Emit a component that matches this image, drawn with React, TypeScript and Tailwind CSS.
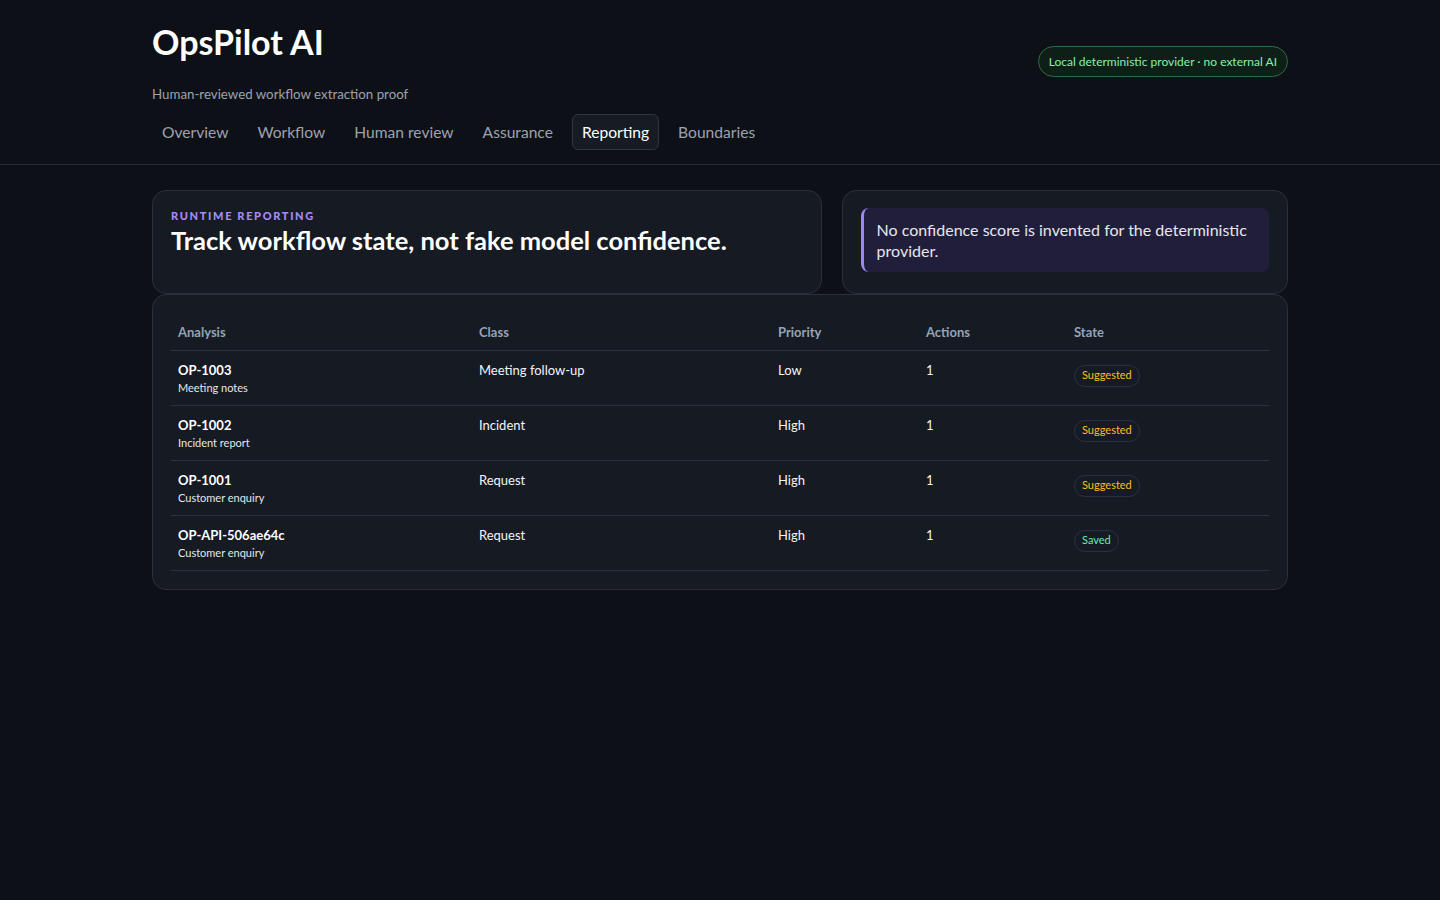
import React from "react";

const rows = [
  { id: "OP-1003", sub: "Meeting notes", cls: "Meeting follow-up", pri: "Low", act: "1", state: "Suggested" },
  { id: "OP-1002", sub: "Incident report", cls: "Incident", pri: "High", act: "1", state: "Suggested" },
  { id: "OP-1001", sub: "Customer enquiry", cls: "Request", pri: "High", act: "1", state: "Suggested" },
  { id: "OP-API-506ae64c", sub: "Customer enquiry", cls: "Request", pri: "High", act: "1", state: "Saved" },
];

const tabs = ["Overview", "Workflow", "Human review", "Assurance", "Reporting", "Boundaries"];

export default function App() {
  return (
    <div
      className="min-h-[900px] bg-[#0d1016] text-[#f3f4f6]"
      style={{ fontFamily: "Lato, 'Noto Sans', sans-serif" }}
    >
      <header className="border-b border-[#262b35]">
        <div className="mx-auto w-[1136px] pt-[22px] pb-[14px]">
          <div className="flex items-center justify-between">
            <div>
              <h1 className="text-[34px] font-bold leading-[40px] text-white">OpsPilot AI</h1>
              <p className="mt-[24px] text-[13.3px] leading-[16px] text-[#9ca3af]">
                Human-reviewed workflow extraction proof
              </p>
            </div>
            <div className="-mt-[2px] rounded-full border border-[#2f6b45] bg-[#0e1f17] px-[10px] py-[6px] text-[12px] leading-[17px] text-[#86efac]">
              Local deterministic provider · no external AI
            </div>
          </div>
          <nav className="mt-[12px] flex gap-[9px]">
            {tabs.map((t) => (
              <div
                key={t}
                className={
                  t === "Reporting"
                    ? "rounded-[6px] border border-[#30363f] bg-[#171b23] px-[9px] py-[7px] text-[15.6px] leading-[20px] text-white"
                    : "border border-transparent px-[9px] py-[7px] text-[15.6px] leading-[20px] text-[#9ca3af]"
                }
              >
                {t}
              </div>
            ))}
          </nav>
        </div>
      </header>

      <main className="mx-auto w-[1136px] pt-[25px]">
        <div className="grid grid-cols-[1.5fr_1fr] gap-[20px]">
          <section className="rounded-[14px] border border-[#2a2f3a] bg-[#161a22] p-[18px]">
            <div className="text-[11px] font-black uppercase leading-[14px] tracking-[0.15em] text-[#a78bfa]">
              Runtime reporting
            </div>
            <h2 className="mt-[2px] text-[25.5px] font-bold leading-[30px] text-white">
              Track workflow state, not fake model confidence.
            </h2>
          </section>
          <section className="rounded-[14px] border border-[#2a2f3a] bg-[#161a22] pt-[17px] pb-[21px] px-[18px]">
            <div className="rounded-[8px] border-l-[3px] border-[#9b87f5] bg-[#211e3b] py-[11px] pl-[13px] pr-[14px] text-[16px] leading-[21px] text-[#e5e7eb]">
              No confidence score is invented for the deterministic provider.
            </div>
          </section>
        </div>

        <section className="rounded-[14px] border border-[#2a2f3a] bg-[#161a22] px-[18px] pt-[18px] pb-[18px]">
          <table className="w-full border-collapse text-left">
            <thead>
              <tr className="border-b border-[#2b303b]">
                <th className="w-[301px] px-[7px] pt-[11px] pb-[10px] text-[13px] font-bold leading-[16px] text-[#94a3b8]">Analysis</th>
                <th className="w-[299px] px-[7px] pt-[11px] pb-[10px] text-[13px] font-bold leading-[16px] text-[#94a3b8]">Class</th>
                <th className="w-[148px] px-[7px] pt-[11px] pb-[10px] text-[13px] font-bold leading-[16px] text-[#94a3b8]">Priority</th>
                <th className="w-[148px] px-[7px] pt-[11px] pb-[10px] text-[13px] font-bold leading-[16px] text-[#94a3b8]">Actions</th>
                <th className="px-[7px] pt-[11px] pb-[10px] text-[13px] font-bold leading-[16px] text-[#94a3b8]">State</th>
              </tr>
            </thead>
            <tbody>
              {rows.map((r) => (
                <tr key={r.id} className="border-b border-[#2b303b] align-top">
                  <td className="h-[55px] px-[7px] pt-[11px]">
                    <div className="text-[13px] font-bold leading-[17px] text-white">{r.id}</div>
                    <div className="text-[11px] leading-[18px] text-[#e5e7eb]">{r.sub}</div>
                  </td>
                  <td className="px-[7px] pt-[11px] text-[13px] leading-[17px] text-[#f3f4f6]">{r.cls}</td>
                  <td className="px-[7px] pt-[11px] text-[13px] leading-[17px] text-[#f3f4f6]">{r.pri}</td>
                  <td className="px-[7px] pt-[11px] text-[13px] leading-[17px] text-[#f3f4f6]">{r.act}</td>
                  <td className="px-[7px] pt-[10px]">
                    <span
                      className={
                        r.state === "Saved"
                          ? "inline-block rounded-full border border-[#2b303b] px-[7px] pt-[2px] pb-[5px] text-[11px] leading-[13px] text-[#6ee7b7]"
                          : "inline-block rounded-full border border-[#2b303b] px-[7px] pt-[2px] pb-[5px] text-[11px] leading-[13px] text-[#fbbf24]"
                      }
                    >
                      {r.state}
                    </span>
                  </td>
                </tr>
              ))}
            </tbody>
          </table>
        </section>
      </main>
    </div>
  );
}
